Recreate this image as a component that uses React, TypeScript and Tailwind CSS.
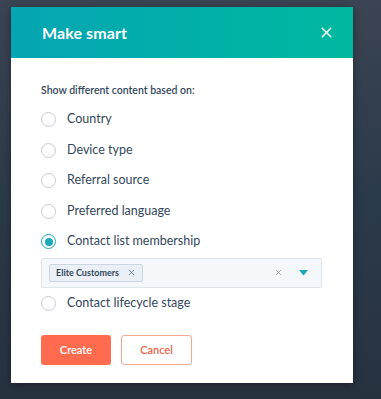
import { X } from "lucide-react";

const options = [
  "Country",
  "Device type",
  "Referral source",
  "Preferred language",
  "Contact list membership",
];

function Radio({ checked }: { checked?: boolean }) {
  return (
    <span
      className={
        "w-[15px] h-[15px] rounded-full border flex items-center justify-center bg-white " +
        (checked ? "border-[#1ba8b8] border-[1.5px]" : "border-[#c4ccd4]")
      }
    >
      {checked && <span className="w-[8px] h-[8px] rounded-full bg-[#1ba8b8]" />}
    </span>
  );
}

export default function App() {
  return (
    <div className="w-[381px] h-[399px] overflow-hidden bg-gradient-to-b from-[#3b4452] via-[#2b3a4a] to-[#27323f] font-['Lato',sans-serif]">
      <div className="ml-[11px] mt-[7px] w-[342px] h-[376px] bg-white shadow-[0_2px_8px_rgba(0,0,0,0.35)] flex flex-col">
        <div className="h-[51px] bg-gradient-to-r from-[#06a5b3] to-[#00b89f] flex items-center justify-between pl-[31px] pr-[18px]">
          <h2 className="text-white font-bold text-[16px] tracking-[0.1px]">Make smart</h2>
          <X size={17} color="#fff" strokeWidth={2} />
        </div>
        <div className="pl-[30px] pr-[31px] pt-[25px]">
          <p className="text-[10.5px] font-semibold text-[#33475b] mb-[13px]">
            Show different content based on:
          </p>
          <div className="flex flex-col gap-[14.5px]">
            {options.map((o, i) => (
              <label key={o} className="flex items-center gap-[11px] h-[16px] text-[12.5px] text-[#33475b]">
                <Radio checked={i === 4} />
                {o}
              </label>
            ))}
          </div>
          <div className="mt-[8px] h-[30px] border border-[#dfe3eb] bg-[#f5f8fa] rounded-[2px] flex items-center pl-[7px] pr-[13px]">
            <span className="h-[18px] px-[6px] flex items-center gap-[8px] bg-[#eaf0f6] border border-[#cbd6e2] rounded-[2px] text-[9px] font-bold text-[#33475b]">
              Elite Customers
              <X size={9} color="#506e91" strokeWidth={2} />
            </span>
            <span className="ml-auto mr-[16px]">
              <X size={9} color="#8a9ab0" strokeWidth={2} />
            </span>
            <svg width="9" height="6" viewBox="0 0 9 6">
              <path d="M0 0h9L4.5 5.5z" fill="#1ba8b8" />
            </svg>
          </div>
          <label className="mt-[8px] flex items-center gap-[11px] h-[16px] text-[12.5px] text-[#33475b]">
            <Radio />
            Contact lifecycle stage
          </label>
          <div className="mt-[23px] flex gap-[10px]">
            <button className="w-[70px] h-[30px] rounded-[3px] bg-[#ff6b4e] text-white text-[11px] font-semibold">
              Create
            </button>
            <button className="w-[71px] h-[30px] rounded-[3px] border border-[#f2a894] bg-white text-[#e8664b] text-[11px] font-semibold">
              Cancel
            </button>
          </div>
        </div>
      </div>
    </div>
  );
}
